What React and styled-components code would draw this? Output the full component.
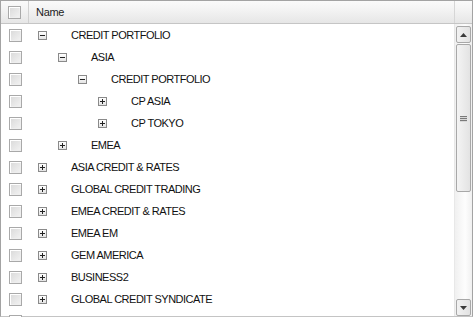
import styled, { createGlobalStyle } from 'styled-components'

const GlobalStyle = createGlobalStyle`
  html, body {
    margin: 0;
    padding: 0;
    background: #fff;
    overflow: hidden;
  }
  body {
    font-family: "Liberation Sans", Arial, sans-serif;
    font-size: 11px;
    color: #000;
  }
`

const Grid = styled.div`
  width: 471px;
  height: 315px;
  border: 1px solid #a3a3a3;
  border-bottom-color: #c4c4c4;
  display: flex;
  flex-flow: column;
`

const Header = styled.div`
  display: flex;
  height: 22px;
  flex-shrink: 0;
  background: linear-gradient(#fafafa, #f2f2f2 45%, #e6e6e6);
  border-bottom: 1px solid #c5c5c5;
`

const HeaderCheckCell = styled.div`
  width: 27px;
  border-right: 1px solid #d0d0d0;
  display: flex;
  align-items: center;
  justify-content: center;
`

const HeaderName = styled.div`
  flex: 1;
  display: flex;
  align-items: center;
  padding-left: 7px;
  color: #222;
  letter-spacing: -0.3px;
  border-right: 1px solid #d6d6d6;
`

const HeaderSpacer = styled.div`
  width: 17px;
`

const Body = styled.div`
  flex: 1;
  display: flex;
  min-height: 0;
`

const Rows = styled.div`
  flex: 1;
  display: flex;
  flex-flow: column;
  height: 0;
  min-height: 100%;
  overflow: visible;
`

const Row = styled.div`
  display: flex;
  align-items: center;
  height: 22px;
  flex-shrink: 0;
`

const CheckCell = styled.div`
  width: 28px;
  display: flex;
  align-items: center;
  justify-content: center;
`

const Check = styled.div`
  width: 11px;
  height: 11px;
  border: 1px solid #a9a9a9;
  background: linear-gradient(135deg, #d9d9d9, #f3f3f3);
  box-shadow: inset 1px 1px 0 #fff, inset -1px -1px 0 #eee;
`

const TreeCell = styled.div`
  display: flex;
  align-items: center;
  padding-left: ${p => 9 + p.$level * 20}px;
`

const Toggle = styled.div`
  width: 7px;
  height: 7px;
  border: 1px solid #8a8a8a;
  background: linear-gradient(#fff, #e4e4e4);
  position: relative;
  margin-right: 24px;

  &::before {
    content: '';
    position: absolute;
    left: 1px;
    top: 3px;
    width: 5px;
    height: 1px;
    background: #222;
  }

  &::after {
    content: '';
    display: ${p => (p.$open ? 'none' : 'block')};
    position: absolute;
    left: 3px;
    top: 1px;
    width: 1px;
    height: 5px;
    background: #222;
  }
`

const Label = styled.span`
  white-space: nowrap;
  color: #111;
  letter-spacing: -0.5px;
`

const Scrollbar = styled.div`
  width: 17px;
  display: flex;
  flex-flow: column;
  padding-top: 2px;
  background: linear-gradient(90deg, #f0f0f0, #fdfdfd 60%, #f0f0f0);
  border-left: 1px solid #e8e8e8;
  flex-shrink: 0;
`

const ScrollButton = styled.div`
  height: 15px;
  margin: 0 1px;
  border: 1px solid #a8a8a8;
  border-radius: 2px;
  background: linear-gradient(90deg, #f2f2f2, #e2e2e2);
  display: flex;
  align-items: center;
  justify-content: center;
  flex-shrink: 0;
`

const Thumb = styled.div`
  height: 146px;
  margin: 1px 1px 0;
  border: 1px solid #a8a8a8;
  border-radius: 2px;
  background: linear-gradient(90deg, #f4f4f4, #e3e3e3);
  display: flex;
  flex-flow: column;
  align-items: center;
  justify-content: center;
  gap: 1px;
  flex-shrink: 0;
`

const Grip = styled.div`
  width: 7px;
  height: 1px;
  background: #7a7a7a;
  box-shadow: 0 1px 0 #d8d8d8;
`

const Track = styled.div`
  flex: 1;
`

const Arrow = ({ up }) => (
  <svg width="7" height="4" viewBox="0 0 7 4">
    <path d={up ? 'M0 4 L3.5 0 L7 4 Z' : 'M0 0 L3.5 4 L7 0 Z'} fill="#3a3a3a" />
  </svg>
)

const items = [
  { name: 'CREDIT PORTFOLIO', level: 0, open: true },
  { name: 'ASIA', level: 1, open: true },
  { name: 'CREDIT PORTFOLIO', level: 2, open: true },
  { name: 'CP ASIA', level: 3 },
  { name: 'CP TOKYO', level: 3 },
  { name: 'EMEA', level: 1 },
  { name: 'ASIA CREDIT & RATES', level: 0 },
  { name: 'GLOBAL CREDIT TRADING', level: 0 },
  { name: 'EMEA CREDIT & RATES', level: 0 },
  { name: 'EMEA EM', level: 0 },
  { name: 'GEM AMERICA', level: 0 },
  { name: 'BUSINESS2', level: 0 },
  { name: 'GLOBAL CREDIT SYNDICATE', level: 0 },
  { name: 'NA CREDIT', level: 0 },
]

const App = () => (
  <>
    <GlobalStyle />
    <Grid>
      <Header>
        <HeaderCheckCell><Check /></HeaderCheckCell>
        <HeaderName>Name</HeaderName>
        <HeaderSpacer />
      </Header>
      <Body>
        <Rows>
          {items.map((item, i) => (
            <Row key={i}>
              <CheckCell><Check /></CheckCell>
              <TreeCell $level={item.level}>
                <Toggle $open={item.open} />
                <Label>{item.name}</Label>
              </TreeCell>
            </Row>
          ))}
        </Rows>
        <Scrollbar>
          <ScrollButton><Arrow up /></ScrollButton>
          <Thumb><Grip /><Grip /><Grip /></Thumb>
          <Track />
          <ScrollButton><Arrow /></ScrollButton>
        </Scrollbar>
      </Body>
    </Grid>
  </>
)

export default App
